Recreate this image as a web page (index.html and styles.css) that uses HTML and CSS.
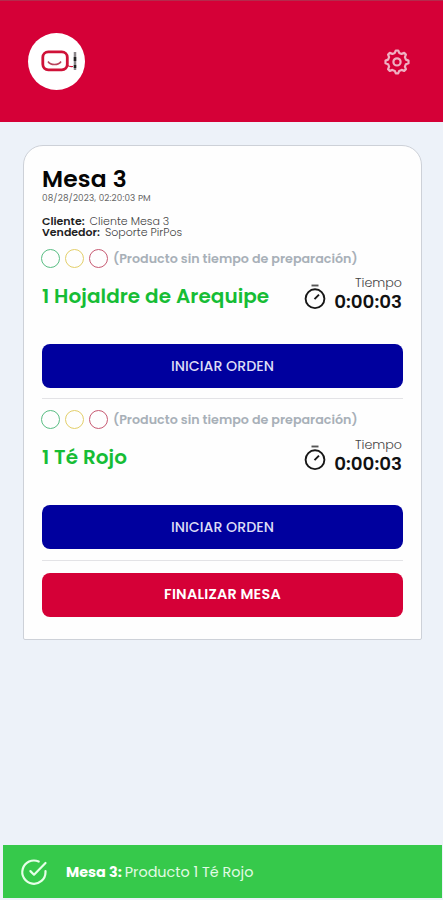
FILE: index.html
```
<!DOCTYPE html>
<html lang="es">
<head>
  <meta charset="UTF-8">
  <meta name="viewport" content="width=device-width, initial-scale=1.0">
  <title>Mesa 3</title>
  <link rel="stylesheet" href="styles.css">
</head>
<body>
  <header class="header">
    <div class="logo">
      <svg width="57" height="57" viewBox="0 0 57 57" fill="none">
        <rect x="14.800" y="18.800" width="24.500" height="18" rx="5.500" stroke="#cf1238" stroke-width="2.800"/>
        <path d="M20 28.500c2.500 4 10.500 4 13 0" stroke="#b8435c" stroke-width="1.600"/>
        <path d="M39 31.500c1.500 2.500 3 2.500 6 2" stroke="#cf1238" stroke-width="1.200"/>
        <path d="M47 19v18" stroke="#8a8589" stroke-width="2.500"/>
        <path d="M47 24v4M47 32v3" stroke="#222" stroke-width="2.500"/>
      </svg>
    </div>
    <svg class="gear" width="28" height="28" viewBox="0 0 28 28" fill="none" stroke="#efb0c2" stroke-width="2.200" stroke-linejoin="round">
      <path d="M11.800 4.900L12.800 2.500h2.400l1 2.400 2.400 1 2.600-1 1.700 1.700-1 2.600 1 2.400 2.600 1v2.600l-2.600 1-1 2.400 1 2.600-1.700 1.700-2.600-1-2.400 1-1 2.500h-2.400l-1-2.500-2.400-1-2.600 1-1.700-1.700 1-2.600-1-2.400-2.600-1v-2.600l2.600-1 1-2.400-1-2.600 1.700-1.700 2.600 1z"/>
      <circle cx="14" cy="13.900" r="3.600"/>
    </svg>
  </header>

  <main class="card">
    <h1 class="title">Mesa 3</h1>
    <div class="date">08/28/2023, 02:20:03 PM</div>
    <div class="info">
      <div><b>Cliente:</b><span>Cliente Mesa 3</span></div>
      <div><b>Vendedor:</b><span>Soporte PirPos</span></div>
    </div>

    <section class="item">
      <div class="lights">
        <i class="light green"></i><i class="light yellow"></i><i class="light red"></i>
        <span class="note">(Producto sin tiempo de preparación)</span>
      </div>
      <div class="row">
        <h2 class="product">1 Hojaldre de Arequipe</h2>
        <svg class="timer" width="24" height="28" viewBox="0 0 24 28" fill="none" stroke="#161616" stroke-width="1.900">
          <path d="M8.500 2.500h7" stroke="#555"/>
          <circle cx="12" cy="15.700" r="9.400"/>
          <path d="M11.500 16.200l4.500-4.500"/>
        </svg>
        <div class="time">
          <span class="time-label">Tiempo</span>
          <b class="time-value">0:00:03</b>
        </div>
      </div>
      <button class="btn start">INICIAR ORDEN</button>
    </section>

    <section class="item">
      <div class="lights">
        <i class="light green"></i><i class="light yellow"></i><i class="light red"></i>
        <span class="note">(Producto sin tiempo de preparación)</span>
      </div>
      <div class="row">
        <h2 class="product">1 Té Rojo</h2>
        <svg class="timer" width="24" height="28" viewBox="0 0 24 28" fill="none" stroke="#161616" stroke-width="1.900">
          <path d="M8.500 2.500h7" stroke="#555"/>
          <circle cx="12" cy="15.700" r="9.400"/>
          <path d="M11.500 16.200l4.500-4.500"/>
        </svg>
        <div class="time">
          <span class="time-label">Tiempo</span>
          <b class="time-value">0:00:03</b>
        </div>
      </div>
      <button class="btn start">INICIAR ORDEN</button>
    </section>

    <button class="btn finish">FINALIZAR MESA</button>
  </main>

  <div class="toast">
    <svg width="28" height="28" viewBox="0 0 28 28" fill="none" stroke="#e6ffe8" stroke-width="2.200" stroke-linecap="round" stroke-linejoin="round">
      <path d="M25.500 13v1.200A11.600 11.600 0 1 1 18.700 3.600"/>
      <path d="M25.500 5L14 16.700l-3.600-3.600"/>
    </svg>
    <p class="toast-text"><b>Mesa 3:</b><span>Producto 1 Té Rojo</span></p>
  </div>
</body>
</html>
```
FILE: styles.css
```
*{box-sizing:border-box;margin:0;padding:0}
body{background:#edf2f9;min-height:900px;display:flex;flex-direction:column;font-family:Poppins,Inter,"Open Sans",sans-serif;white-space:nowrap}
.header{height:122px;background:#d50037;border-top:1px solid #b52a4c;display:flex;justify-content:space-between;align-items:center;padding:0 32px 0 28px}
.logo{width:57px;height:57px;border-radius:50%;background:#fff}
.gear{display:block}
.card{width:399px;height:495px;margin:23px 0 0 23px;padding:20px 18px 0;background:#fefefe;border:1px solid #cdd1d8;border-radius:20px 20px 2px 2px}
.title{font-size:23.4px;line-height:26px;font-weight:600;color:#050505;letter-spacing:.2px}
.date{font-size:8.8px;line-height:12px;color:#666;letter-spacing:.14px}
.info{margin-top:12px;font-size:11px;line-height:11px;color:#444}
.info b{color:#222;font-weight:600;margin-right:5px}
.info span{font-weight:300}
.item{height:150px;margin-top:11px;border-bottom:1px solid #e3e3e6}
.item + .item{height:151px}
.lights{display:flex;align-items:center;gap:5px;height:19px;margin-left:-1px}
.light{width:19px;height:19px;border:1px solid;border-radius:50%}
.green{border-color:#59bd83}
.yellow{border-color:#e3cf6a}
.red{border-color:#c75a72}
.note{font-size:12.7px;font-weight:600;color:#a8b0b8}
.row{display:flex;height:57px;padding-top:7px}
.product{flex:1;font-size:20px;line-height:24px;font-weight:600;color:#16bd35;padding-top:9px;letter-spacing:.05px}
.timer{margin-top:8px}
.time{width:75px;margin-left:1px;padding-right:1px;display:flex;flex-direction:column;align-items:flex-end}
.time-label{font-size:12.7px;line-height:16px;font-weight:300;color:#444}
.time-value{font-size:18.3px;line-height:22px;font-weight:600;color:#111}
.item + .item .time{padding-top:1px}
.btn{display:block;width:361px;height:44px;border:0;border-radius:8px;color:#fff;font:500 14.2px/44px Poppins,Inter,sans-serif;text-align:center}
.start{background:#00009e;color:#dcdcf5;margin-top:19px}
.finish{background:#d50037;font-size:14.4px;line-height:42px;padding-bottom:2px;font-weight:600;letter-spacing:.2px;margin-top:12px}
.toast{width:439px;height:53px;margin:auto 0 2px 3px;background:#36c94b;color:#fff;display:flex;align-items:center;padding-left:17px}
.toast-text{margin-left:18px;font-size:14.4px;line-height:22px;padding-top:1px;display:flex;gap:3px}
.toast-text span{color:#e2fbe5}
```
